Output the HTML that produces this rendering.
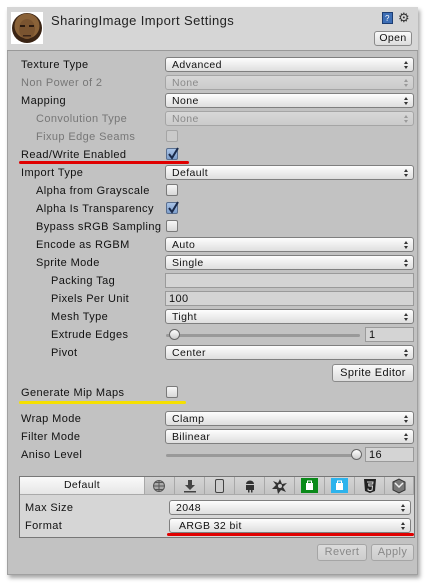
<!DOCTYPE html>
<html><head><meta charset="utf-8"><style>
*{box-sizing:border-box;margin:0;padding:0}
body{width:427px;height:583px;background:#fff;position:relative;overflow:hidden;font-family:"Liberation Sans",sans-serif;font-size:11px;letter-spacing:.4px;color:#111}
#p{position:absolute;left:7px;top:7px;width:411px;height:568px;background:#c2c2c2;border:1px solid #a0a0a0;box-shadow:2px 3px 4px rgba(0,0,0,.35)}
#hd{position:absolute;left:7px;top:7px;width:411px;height:44px;background:#d6d6d6;border-bottom:1px solid #999}
.a{position:absolute}
.l{position:absolute;line-height:14px;white-space:nowrap;margin-top:1px}
.dis{color:#777}
.pop{position:absolute;left:165px;width:249px;height:15px;border:1px solid #7f7f7f;border-radius:3px;background:linear-gradient(#fdfdfd,#dedede);padding-left:6px;line-height:14px;font-size:10.5px}
.pop.d{border-color:#a5a5a5;background:linear-gradient(#d8d8d8,#cbcbcb);color:#8a8a8a}
.pop:after{content:"";position:absolute;right:5px;top:3px;width:0;height:0;border-left:2.5px solid transparent;border-right:2.5px solid transparent;border-bottom:3px solid #333}
.pop:before{content:"";position:absolute;right:5px;top:8px;width:0;height:0;border-left:2.5px solid transparent;border-right:2.5px solid transparent;border-top:3px solid #333}
.pop.d:after{border-bottom-color:#999}.pop.d:before{border-top-color:#999}
.cb{position:absolute;width:12px;height:12px;border:1px solid #7a7a7a;border-radius:2px;background:linear-gradient(#f6f6f6,#d8d8d8)}
.cb.d{border-color:#a5a5a5;background:#cacaca}
.cb.on{background:linear-gradient(#a9c3e6,#7e9fcc);border-color:#5a6f8f}
.cb.on svg{position:absolute;left:0;top:-2px}
.tf{position:absolute;height:15px;border:1px solid #9a9a9a;background:#d4d4d4;padding-left:3px;line-height:14px}
.btn{position:absolute;border:1px solid #8a8a8a;border-radius:3px;background:linear-gradient(#fafafa,#dcdcdc);text-align:center}
.tab{position:absolute;top:477px;height:17px;width:30px;border-right:1px solid #a8a8a8;background:linear-gradient(#d4d4d4,#c4c4c4)}
</style></head><body>
<div id="p"></div>
<div id="hd"></div>
<svg class="a" style="left:11px;top:12px" width="32" height="32"><rect width="32" height="32" fill="#fff"/><circle cx="16" cy="16" r="15" fill="#3a2414"/><circle cx="16" cy="14" r="12.5" fill="#8a6238"/><ellipse cx="16" cy="17" rx="8" ry="10" fill="#7a5430"/><rect x="9" y="13" width="5" height="2" fill="#2a1a10"/><rect x="18" y="13" width="5" height="2" fill="#2a1a10"/><rect x="12" y="23" width="8" height="1.5" fill="#3a2418"/></svg>
<div class="l" style="left:51px;top:12px;font-size:13px;line-height:16px;color:#222">SharingImage Import Settings</div>
<svg class="a" style="left:382px;top:12px" width="11" height="12"><rect x=".5" y=".5" width="10" height="11" fill="#3d6eb5" stroke="#1c3d73"/><text x="3" y="9" font-size="8" fill="#fff" font-family="Liberation Sans">?</text></svg>
<div class="l" style="left:398px;top:10px;font-size:13px;color:#333">⚙</div>
<div class="btn" style="left:374px;top:31px;width:38px;height:15px;line-height:13px;font-size:10.5px">Open</div>

<div class="l" style="left:21px;top:57px">Texture Type</div><div class="pop" style="top:57px">Advanced</div>
<div class="l dis" style="left:21px;top:75px">Non Power of 2</div><div class="pop d" style="top:75px">None</div>
<div class="l" style="left:21px;top:93px">Mapping</div><div class="pop" style="top:93px">None</div>
<div class="l dis" style="left:36px;top:111px">Convolution Type</div><div class="pop d" style="top:111px">None</div>
<div class="l dis" style="left:36px;top:129px">Fixup Edge Seams</div><div class="cb d" style="left:166px;top:130px"></div>
<div class="l" style="left:21px;top:147px">Read/Write Enabled</div><div class="cb on" style="left:166px;top:148px"><svg width="12" height="13"><path d="M2 7l3 4 6-10" stroke="#1a2a4a" stroke-width="2" fill="none"/></svg></div>
<div class="a" style="left:19px;top:161px;width:170px;height:3px;background:#e00000;border-radius:2px"></div>
<div class="l" style="left:21px;top:165px">Import Type</div><div class="pop" style="top:165px">Default</div>
<div class="l" style="left:36px;top:183px">Alpha from Grayscale</div><div class="cb" style="left:166px;top:184px"></div>
<div class="l" style="left:36px;top:201px">Alpha Is Transparency</div><div class="cb on" style="left:166px;top:202px"><svg width="12" height="13"><path d="M2 7l3 4 6-10" stroke="#1a2a4a" stroke-width="2" fill="none"/></svg></div>
<div class="l" style="left:36px;top:219px;width:128px;overflow:hidden">Bypass sRGB Sampling</div><div class="cb" style="left:166px;top:220px"></div>
<div class="l" style="left:36px;top:237px">Encode as RGBM</div><div class="pop" style="top:237px">Auto</div>
<div class="l" style="left:36px;top:255px">Sprite Mode</div><div class="pop" style="top:255px">Single</div>
<div class="l" style="left:51px;top:273px">Packing Tag</div><div class="tf" style="left:165px;top:273px;width:249px"></div>
<div class="l" style="left:51px;top:291px">Pixels Per Unit</div><div class="tf" style="left:165px;top:291px;width:249px">100</div>
<div class="l" style="left:51px;top:309px">Mesh Type</div><div class="pop" style="top:309px">Tight</div>
<div class="l" style="left:51px;top:327px">Extrude Edges</div>
<div class="a" style="left:166px;top:334px;width:194px;height:3px;background:#999;border-radius:2px"></div>
<div class="a" style="left:169px;top:329px;width:11px;height:11px;border-radius:50%;border:1px solid #666;background:linear-gradient(#fff,#ccc)"></div>
<div class="tf" style="left:365px;top:327px;width:49px">1</div>
<div class="l" style="left:51px;top:345px">Pivot</div><div class="pop" style="top:345px">Center</div>
<div class="btn" style="left:332px;top:364px;width:82px;height:18px;line-height:16px">Sprite Editor</div>
<div class="l" style="left:21px;top:385px">Generate Mip Maps</div><div class="cb" style="left:166px;top:386px"></div>
<div class="a" style="left:19px;top:401px;width:167px;height:3px;background:#f5e000;border-radius:2px"></div>
<div class="l" style="left:21px;top:411px">Wrap Mode</div><div class="pop" style="top:411px">Clamp</div>
<div class="l" style="left:21px;top:429px">Filter Mode</div><div class="pop" style="top:429px">Bilinear</div>
<div class="l" style="left:21px;top:447px">Aniso Level</div>
<div class="a" style="left:166px;top:454px;width:194px;height:3px;background:#999;border-radius:2px"></div>
<div class="a" style="left:351px;top:449px;width:11px;height:11px;border-radius:50%;border:1px solid #666;background:linear-gradient(#fff,#ccc)"></div>
<div class="tf" style="left:365px;top:447px;width:49px">16</div>

<div class="a" style="left:19px;top:476px;width:396px;height:62px;border:1px solid #777;background:#d6d6d6"></div>
<div class="a" style="left:20px;top:477px;width:125px;height:17px;background:linear-gradient(#fafafa,#e6e6e6);border-right:1px solid #a8a8a8;text-align:center;line-height:17px;font-size:10.5px">Default</div>
<div class="tab" style="left:145px"><svg width="30" height="17"><circle cx="14" cy="9" r="5.5" fill="#aaa" stroke="#555"/><path d="M8.5 9h11M14 3.5v11M10 5.5h8M10 12.5h8" stroke="#555" fill="none"/></svg></div>
<div class="tab" style="left:175px"><svg width="30" height="17"><path d="M13 3h4v5h3l-5 5-5-5h3z" fill="#444"/><rect x="9" y="14" width="12" height="1.5" fill="#444"/></svg></div>
<div class="tab" style="left:205px"><svg width="30" height="17"><rect x="10.5" y="2.5" width="8" height="13" rx="1.5" fill="#ccc" stroke="#444"/></svg></div>
<div class="tab" style="left:235px"><svg width="30" height="17"><path d="M11 7a4 3.5 0 0 1 8 0z M11 8h8v5h-8z M13 13h1.5v2.5h-1.5zM16 13h1.5v2.5h-1.5z" fill="#333"/></svg></div>
<div class="tab" style="left:265px"><svg width="30" height="17"><path d="M15 2l2 5 5-1-4 4 3 5-5-2-3 4-1-5-5 0 4-4-3-4 5 2z" fill="#333"/><circle cx="15" cy="9" r="2" fill="#ccc"/></svg></div>
<div class="tab" style="left:295px"><svg width="30" height="17"><rect x="6" y="1" width="17" height="15" fill="#0a8a1a"/><rect x="11" y="6" width="7" height="7" fill="#fff"/><rect x="12.5" y="4" width="4" height="3" fill="none" stroke="#fff"/></svg></div>
<div class="tab" style="left:325px"><svg width="30" height="17"><rect x="6" y="1" width="17" height="15" fill="#2db3ec"/><rect x="11" y="6" width="7" height="7" fill="#fff"/><rect x="12.5" y="4" width="4" height="3" fill="none" stroke="#fff"/></svg></div>
<div class="tab" style="left:355px"><svg width="30" height="17"><path d="M9 2h12l-1 12-5 2-5-2z" fill="#222"/><path d="M12 5h6l-.3 2h-4l.2 2h3.6l-.4 4-2 .7-2-.7-.1-1.5" stroke="#ddd" fill="none"/></svg></div>
<div class="tab" style="left:385px;width:29px"><svg width="29" height="17"><path d="M8 5l6-3 6 3v8l-6 3-6-3z" fill="#777" stroke="#333"/><path d="M10 6l4 4 4-4" stroke="#eee" fill="none" stroke-width="1.5"/></svg></div>
<div class="a" style="left:20px;top:494px;width:394px;height:1px;background:#aaa"></div>
<div class="l" style="left:25px;top:500px">Max Size</div><div class="pop" style="left:169px;width:242px;top:500px">2048</div>
<div class="l" style="left:25px;top:518px">Format</div><div class="pop" style="left:169px;width:242px;top:518px;padding-left:9px">ARGB 32 bit</div>
<div class="a" style="left:167px;top:533px;width:247px;height:3px;background:#e00000;border-radius:2px"></div>
<div class="btn" style="left:317px;top:544px;width:50px;height:17px;line-height:15px;color:#888;border-color:#a5a5a5;background:linear-gradient(#dcdcdc,#cdcdcd)">Revert</div>
<div class="btn" style="left:371px;top:544px;width:43px;height:17px;line-height:15px;color:#888;border-color:#a5a5a5;background:linear-gradient(#dcdcdc,#cdcdcd)">Apply</div>
</body></html>
